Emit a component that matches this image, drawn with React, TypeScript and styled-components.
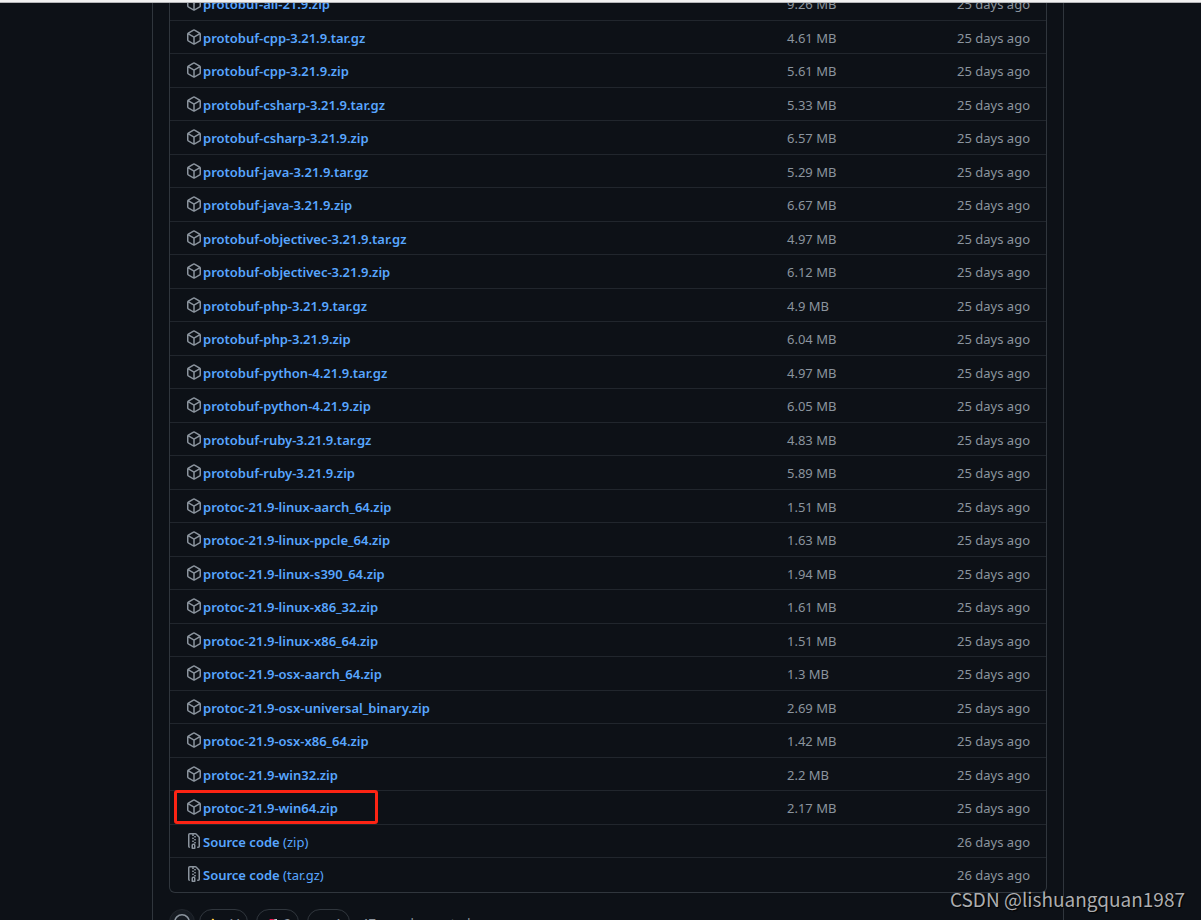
import React from "react";
import styled, { createGlobalStyle } from "styled-components";

const Global = createGlobalStyle`
  * { box-sizing: border-box; }
  body { margin: 0; background: #0d1117; }
`;

const Page = styled.div`
  position: relative;
  height: 100vh;
  overflow: hidden;
  display: flex;
  flex-direction: column;
  background: #0d1117;
  color: #8b949e;
  font: 13px/20px "Noto Sans", "Open Sans", sans-serif;
`;

const BrowserEdge = styled.div`
  flex: none;
  height: 3px;
  background: #f1f1f1;
  border-bottom: 1px solid #b4b5b8;
`;

const Viewport = styled.div`
  flex: 1;
  min-height: 0;
  overflow: hidden;
  padding-left: 15px;
`;

const Release = styled.main`
  max-width: 912px;
  margin: -16px auto 0;
  padding: 0 16px 24px;
  border: solid #30363d;
  border-width: 0 1px;
`;

const Assets = styled.div`
  border: 1px solid #30363d;
  border-top: 0;
  border-radius: 0 0 6px 6px;
`;

const Table = styled.table`
  width: 100%;
  border-spacing: 0;
  table-layout: fixed;
`;

const Row = styled.tr`
  height: 33px;
  &:nth-child(odd) {
    height: 34px;
  }
  &:not(:last-child) td {
    border-bottom: 1px solid #21262d;
  }
`;

const Cell = styled.td<{ $width?: number; $right?: boolean }>`
  width: ${(p) => (p.$width ? `${p.$width}px` : "auto")};
  padding: 7px 16px 0;
  vertical-align: top;
  text-align: ${(p) => (p.$right ? "right" : "left")};
  white-space: nowrap;
`;

const Asset = styled.div`
  position: relative;
  display: flex;
  align-items: flex-start;
  gap: 1px;
`;

const Icon = styled.svg`
  flex: none;
  width: 16px;
  height: 16px;
  margin-top: 1px;
  fill: #8b949e;
`;

const AssetLink = styled.a`
  color: #58a6ff;
  text-decoration: none;
  font-weight: 600;
`;

const Format = styled.span`
  font-weight: 400;
`;

const Highlight = styled.span`
  position: absolute;
  top: -8px;
  bottom: -6px;
  left: -12px;
  width: 204px;
  border: 3px solid #fc2414;
  border-radius: 3px;
  pointer-events: none;
`;

const Reactions = styled.div`
  display: flex;
  align-items: flex-start;
  gap: 8px;
  margin-top: 16px;
  line-height: 28px;
`;

const AddReaction = styled.button`
  display: flex;
  justify-content: center;
  width: 26px;
  height: 26px;
  margin-right: -4px;
  padding: 3px 0 0;
  border: 1px solid #21262d;
  border-radius: 50%;
  background: #161b22;
`;

const Reaction = styled.button<{ $width: number }>`
  display: flex;
  justify-content: center;
  gap: 6px;
  width: ${(p) => p.$width}px;
  height: 26px;
  padding: 0;
  border: 1px solid #30363d;
  border-radius: 13px;
  background: transparent;
  color: #8b949e;
  font: inherit;
  font-size: 12px;
`;

const Emoji = styled.svg`
  flex: none;
  width: 14px;
  height: 14px;
  margin-top: 8px;
`;

const Total = styled.span`
  margin-left: 3px;
  line-height: 29px;
  white-space: nowrap;
`;

const Watermark = styled.div`
  position: absolute;
  right: 16px;
  bottom: 6px;
  color: #adaeb0;
  font: 19px/30px "Noto Sans CJK SC", sans-serif;
  text-shadow: 1px 1px 1px #000;
`;

const PackageIcon = () => (
  <Icon viewBox="0 0 16 16" aria-hidden="true">
    <path
      fillRule="evenodd"
      d="M8.878.392a1.75 1.75 0 00-1.756 0l-5.25 3.045A1.75 1.75 0 001 4.951v6.098c0 .624.332 1.2.872 1.514l5.25 3.045a1.75 1.75 0 001.756 0l5.25-3.045c.54-.313.872-.89.872-1.514V4.951c0-.624-.332-1.2-.872-1.514L8.878.392zM7.875 1.69a.25.25 0 01.25 0l4.63 2.685L8 7.133 3.245 4.375l4.63-2.685zM2.5 5.677v5.372c0 .09.047.171.125.216l4.625 2.683V8.432L2.5 5.677zm6.25 8.271l4.625-2.683a.25.25 0 00.125-.216V5.677L8.75 8.432v5.516z"
    />
  </Icon>
);

const ZipIcon = () => (
  <Icon viewBox="0 0 16 16" aria-hidden="true">
    <path
      fillRule="evenodd"
      d="M3.5 1.75a.25.25 0 01.25-.25h3a.75.75 0 000 1.5h.5a.75.75 0 000-1.5h2.086a.25.25 0 01.177.073l2.914 2.914a.25.25 0 01.073.177v8.586a.25.25 0 01-.25.25h-.5a.75.75 0 000 1.5h.5A1.75 1.75 0 0014 13.25V4.664c0-.464-.184-.909-.513-1.237L10.573.513A1.75 1.75 0 009.336 0H3.75A1.75 1.75 0 002 1.75v11.5c0 .649.353 1.214.874 1.515a.75.75 0 10.752-1.298.25.25 0 01-.126-.217V1.75zM8.75 3a.75.75 0 000 1.5h.5a.75.75 0 000-1.5h-.5zM6 5.25a.75.75 0 01.75-.75h.5a.75.75 0 010 1.5h-.5A.75.75 0 016 5.25zm2 1.5A.75.75 0 018.75 6h.5a.75.75 0 010 1.5h-.5A.75.75 0 018 6.75zm-1.25.75a.75.75 0 000 1.5h.5a.75.75 0 000-1.5h-.5zM8 9.75A.75.75 0 018.75 9h.5a.75.75 0 010 1.5h-.5A.75.75 0 018 9.75zm-.75.75a1.75 1.75 0 00-1.75 1.75v3c0 .414.336.75.75.75h2.5a.75.75 0 00.75-.75v-3a1.75 1.75 0 00-1.75-1.75h-.5zM7 12.25a.25.25 0 01.25-.25h.5a.25.25 0 01.25.25v2.25H7v-2.25z"
    />
  </Icon>
);

const SmileyIcon = () => (
  <Icon viewBox="0 0 16 16" aria-hidden="true">
    <path
      fillRule="evenodd"
      d="M1.5 8a6.5 6.5 0 1113 0 6.5 6.5 0 01-13 0zM8 0a8 8 0 100 16A8 8 0 008 0zM5 8a1 1 0 100-2 1 1 0 000 2zm7-1a1 1 0 11-2 0 1 1 0 012 0zM5.32 9.636a.75.75 0 011.038.175l.007.009c.103.118.22.222.35.31.264.178.683.37 1.285.37.602 0 1.02-.192 1.285-.371.13-.088.247-.192.35-.31l.007-.008a.75.75 0 111.222.87c-.204.289-.47.54-.727.715C9.65 11.729 8.962 12 8 12s-1.65-.271-2.137-.604a3.2 3.2 0 01-.727-.715.75.75 0 01.184-1.045z"
    />
  </Icon>
);

type AssetData = { name: string; size?: string; age?: string; format?: string; marked?: boolean };

const assets: AssetData[] = [
  { name: "protobuf-all-21.9.zip", size: "9.26 MB" },
  { name: "protobuf-cpp-3.21.9.tar.gz", size: "4.61 MB" },
  { name: "protobuf-cpp-3.21.9.zip", size: "5.61 MB" },
  { name: "protobuf-csharp-3.21.9.tar.gz", size: "5.33 MB" },
  { name: "protobuf-csharp-3.21.9.zip", size: "6.57 MB" },
  { name: "protobuf-java-3.21.9.tar.gz", size: "5.29 MB" },
  { name: "protobuf-java-3.21.9.zip", size: "6.67 MB" },
  { name: "protobuf-objectivec-3.21.9.tar.gz", size: "4.97 MB" },
  { name: "protobuf-objectivec-3.21.9.zip", size: "6.12 MB" },
  { name: "protobuf-php-3.21.9.tar.gz", size: "4.9 MB" },
  { name: "protobuf-php-3.21.9.zip", size: "6.04 MB" },
  { name: "protobuf-python-4.21.9.tar.gz", size: "4.97 MB" },
  { name: "protobuf-python-4.21.9.zip", size: "6.05 MB" },
  { name: "protobuf-ruby-3.21.9.tar.gz", size: "4.83 MB" },
  { name: "protobuf-ruby-3.21.9.zip", size: "5.89 MB" },
  { name: "protoc-21.9-linux-aarch_64.zip", size: "1.51 MB" },
  { name: "protoc-21.9-linux-ppcle_64.zip", size: "1.63 MB" },
  { name: "protoc-21.9-linux-s390_64.zip", size: "1.94 MB" },
  { name: "protoc-21.9-linux-x86_32.zip", size: "1.61 MB" },
  { name: "protoc-21.9-linux-x86_64.zip", size: "1.51 MB" },
  { name: "protoc-21.9-osx-aarch_64.zip", size: "1.3 MB" },
  { name: "protoc-21.9-osx-universal_binary.zip", size: "2.69 MB" },
  { name: "protoc-21.9-osx-x86_64.zip", size: "1.42 MB" },
  { name: "protoc-21.9-win32.zip", size: "2.2 MB" },
  { name: "protoc-21.9-win64.zip", size: "2.17 MB", marked: true },
  { name: "Source code", format: "(zip)", age: "26 days ago" },
  { name: "Source code", format: "(tar.gz)", age: "26 days ago" },
];

export default function App() {
  return (
    <Page>
      <Global />
      <BrowserEdge />
      <Viewport>
        <Release>
          <Assets>
            <Table>
              <tbody>
                {assets.map((a) => (
                  <Row key={a.name + (a.format ?? "")}>
                    <Cell>
                      <Asset>
                        {a.format ? <ZipIcon /> : <PackageIcon />}
                        <AssetLink href="#">
                          {a.name}
                          {a.format && <Format> {a.format}</Format>}
                        </AssetLink>
                        {a.marked && <Highlight />}
                      </Asset>
                    </Cell>
                    <Cell $width={135}>{a.size}</Cell>
                    <Cell $width={140} $right>
                      {a.age ?? "25 days ago"}
                    </Cell>
                  </Row>
                ))}
              </tbody>
            </Table>
          </Assets>
          <Reactions>
            <AddReaction aria-label="Add your reaction">
              <SmileyIcon />
            </AddReaction>
            <Reaction $width={49} aria-label="Thumbs up, 44">
              <Emoji viewBox="0 0 14 14" aria-hidden="true">
                <path
                  fill="#ffc83d"
                  d="M5 1c1-1 3 0 2 3l-.5 2H12a1.2 1.2 0 010 2.4 1.2 1.2 0 01-.5 2.2 1.2 1.2 0 01-1 2H4C2 12.6 1 11 1 9s1-3 2.500-4L5 1z"
                />
              </Emoji>
              44
            </Reaction>
            <Reaction $width={43} aria-label="Rocket, 2">
              <Emoji viewBox="0 0 14 14" aria-hidden="true">
                <path fill="#d8dee4" d="M13 1c-4 0-7 2-9 7l2 2c5-2 7-5 7-9z" />
                <path fill="#e8124c" d="M3 5l3-4h4L5 7zM9 11l4-3-1-4-5 6zM1 13l2-5 3 3z" />
              </Emoji>
              2
            </Reaction>
            <Reaction $width={43} aria-label="Eyes, 1">
              <Emoji viewBox="0 0 14 14" aria-hidden="true">
                <ellipse cx="4" cy="8" rx="3" ry="4" fill="#fff" />
                <ellipse cx="10" cy="8" rx="3" ry="4" fill="#fff" />
                <circle cx="3" cy="8" r="1.5" fill="#402a32" />
                <circle cx="9" cy="8" r="1.5" fill="#402a32" />
              </Emoji>
              1
            </Reaction>
            <Total>47 people reacted</Total>
          </Reactions>
        </Release>
      </Viewport>
      <Watermark>CSDN @lishuangquan1987</Watermark>
    </Page>
  );
}
